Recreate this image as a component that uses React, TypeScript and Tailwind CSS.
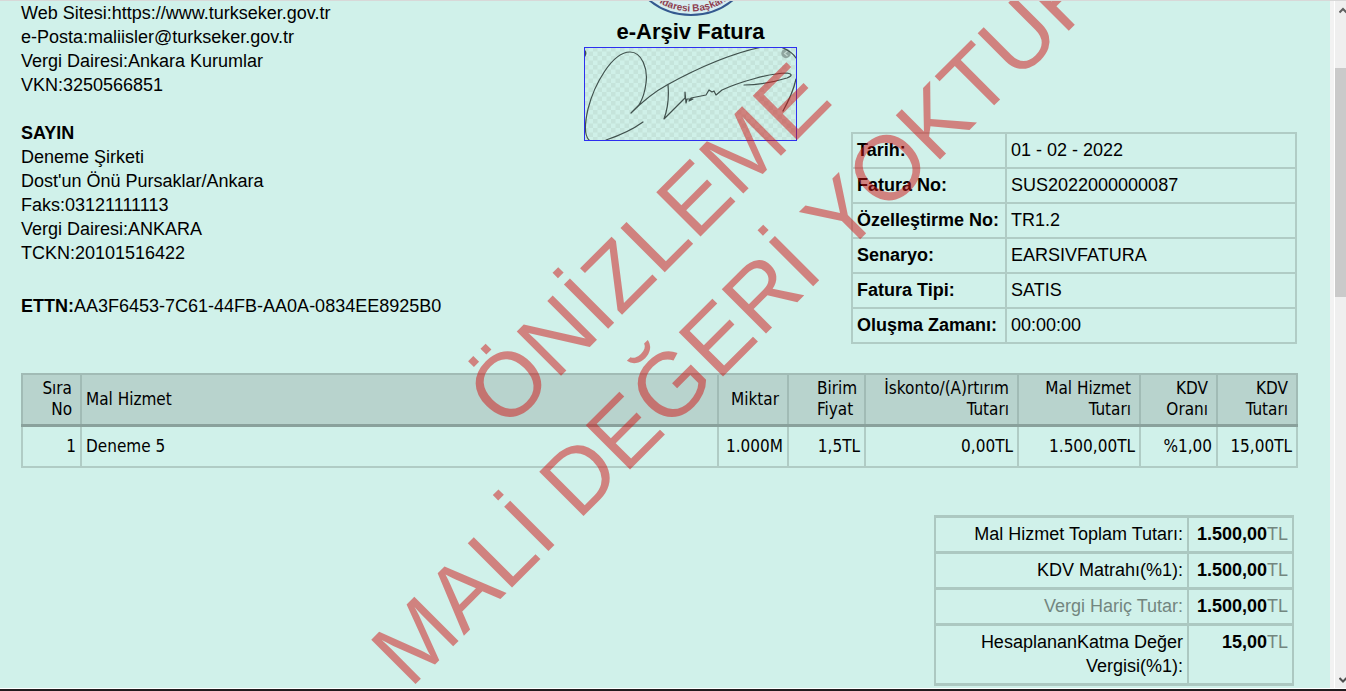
const BORDER = "border-2 border-[#b0ccc5]";

const details: [string, string][] = [
  ["Tarih:", "01 - 02 - 2022"],
  ["Fatura No:", "SUS2022000000087"],
  ["Özelleştirme No:", "TR1.2"],
  ["Senaryo:", "EARSIVFATURA"],
  ["Fatura Tipi:", "SATIS"],
  ["Oluşma Zamanı:", "00:00:00"],
];

const columns = [
  { title: "Sıra No", value: "1", width: "w-[59px]", align: "text-right pl-3 pr-2", cell: "text-right" },
  { title: "Mal Hizmet", value: "Deneme 5", width: "", align: "text-left px-1", cell: "text-left" },
  { title: "Miktar", value: "1.000M", width: "w-[70px]", align: "text-right pr-2", cell: "text-right" },
  { title: "Birim Fiyat", value: "1,5TL", width: "w-[77px]", align: "text-left pl-[28px]", cell: "text-right" },
  { title: "İskonto/(A)rtırım Tutarı", value: "0,00TL", width: "w-[153px]", align: "text-right pr-2", cell: "text-right" },
  { title: "Mal Hizmet Tutarı", value: "1.500,00TL", width: "w-[122px]", align: "text-right pl-3 pr-2", cell: "text-right" },
  { title: "KDV Oranı", value: "%1,00", width: "w-[77px]", align: "text-right pl-3 pr-2", cell: "text-right" },
  { title: "KDV Tutarı", value: "15,00TL", width: "w-[80px]", align: "text-right pl-3 pr-2", cell: "text-right" },
];

const totals = [
  { label: "Mal Hizmet Toplam Tutarı:", value: "1.500,00", muted: false },
  { label: "KDV Matrahı(%1):", value: "1.500,00", muted: false },
  { label: "Vergi Hariç Tutar:", value: "1.500,00", muted: true },
  { label: "HesaplananKatma Değer Vergisi(%1):", value: "15,00", muted: false },
];

function Seal() {
  return (
    <svg width="134" height="15" viewBox="0 119 134 15" className="block" aria-hidden="true">
      <circle cx="67" cy="67" r="66" fill="#d6eef0" stroke="#34598f" strokeWidth="2" />
      <path id="seal-ring" d="M4.500 67 A62.500 62.500 0 0 0 129.500 67" fill="none" />
      <text fontSize="10" fontWeight="700" fill="#8f3f50" fontFamily="Liberation Sans, sans-serif" textAnchor="middle">
        <textPath href="#seal-ring" startOffset="51%">İdaresi Başkan</textPath>
      </text>
    </svg>
  );
}

function Signature() {
  return (
    <svg width="213" height="94" viewBox="0 0 213 94" className="block" role="img" aria-label="İmza">
      <defs>
        <pattern id="checker" width="9" height="9" patternUnits="userSpaceOnUse">
          <rect width="9" height="9" fill="#cff0e8" />
          <rect width="4.5" height="4.5" fill="#c5e4db" />
          <rect x="4.5" y="4.5" width="4.5" height="4.5" fill="#c5e4db" />
        </pattern>
      </defs>
      <rect width="213" height="94" fill="url(#checker)" />
      <path d="M1 3 Q4 6 1 10Z" fill="#41534f" />
      <circle cx="202" cy="6.500" r="4.700" fill="#8fa59f" />
      <path d="M203.500 4 L200.500 6.500 L203.500 9" fill="none" stroke="#c2d8d1" strokeWidth="1.200" />
      <g fill="none" stroke="#40514d" strokeWidth="1.200" strokeLinecap="round" strokeLinejoin="round">
        <path d="M59 75 C48 83 34 89 22 93 M5 93 C0 88 1 75 4 62 C10 38 28 5 46 5 C58 5 64 22 62 36 C61 45 58 53 55 58 L47 66 C60 53 70 45 83 38 C112 22 145 7 178 0 M197 0 C204 3 209 6 212 11 M212 32 C209 46 204 55 199 64" />
        <path d="M84 38 C85 49 84 61 80 72 C87 65 94 58 101 51 L101 45 L102 56 L103 52 L109 52 L105 54 L107 51 C112 50 117 49 122 48 L125 43 L128 45 L130 44 L132 48 L138 43 C155 35 187 26 203 26 C209 27 208 29 203 31 C190 35 174 38 160 38" />
      </g>
      <rect x="0.500" y="0.500" width="212" height="93" fill="none" stroke="#2d2ff0" />
    </svg>
  );
}

function Watermark() {
  return (
    <div className="pointer-events-none absolute top-[544px] left-[266px] origin-top-left -rotate-45 text-[91px] leading-[115px] whitespace-nowrap text-[#d01414]/50">
      <p className="pl-[250px]">ÖNİZLEME</p>
      <p>MALİ DEĞERİ YOKTUR</p>
    </div>
  );
}

function Scrollbar() {
  return (
    <div className="flex w-[11px] shrink-0 flex-col items-end overflow-hidden bg-[#efefef]" aria-hidden="true">
      <svg width="7" height="67" viewBox="0 0 7 67" className="shrink-0">
        <path d="M0.500 11.500 L4 8 L7.500 11.500" fill="none" stroke="#606060" strokeWidth="2" />
      </svg>
      <div className="h-1/3 w-full bg-[#cacaca]" />
      <svg width="7" height="14" viewBox="0 0 7 14" className="mt-auto shrink-0">
        <path d="M0.500 4 L4 7.500 L7.500 4" fill="none" stroke="#505050" strokeWidth="2" />
      </svg>
    </div>
  );
}

export default function App() {
  return (
    <div className="flex h-screen flex-col overflow-hidden border-t border-[#d8d8d8] bg-white font-['Liberation_Sans',Arial,sans-serif] text-[18px] leading-6 text-black">
      <div className="flex min-h-0 flex-1">
        <main className="relative min-w-0 flex-1 overflow-hidden bg-[#d0f1ea] pr-8 pl-[21px]">
          <div className="grid grid-cols-[563px_213px_1fr]">
            <section>
              <p>Web Sitesi:https://www.turkseker.gov.tr</p>
              <p>e-Posta:maliisler@turkseker.gov.tr</p>
              <p>Vergi Dairesi:Ankara Kurumlar</p>
              <p>VKN:3250566851</p>
              <p className="mt-6 font-bold">SAYIN</p>
              <p>Deneme Şirketi</p>
              <p>Dost'un Önü Pursaklar/Ankara</p>
              <p>Faks:03121111113</p>
              <p>Vergi Dairesi:ANKARA</p>
              <p>TCKN:20101516422</p>
              <p className="mt-[29px]">
                <b>ETTN:</b>AA3F6453-7C61-44FB-AA0A-0834EE8925B0
              </p>
            </section>
            <section className="flex flex-col items-center">
              <Seal />
              <h1 className="mt-1 mb-[3px] text-[22px] leading-6 font-bold">e-Arşiv Fatura</h1>
              <Signature />
            </section>
            <section className="pt-[131px] pl-[54px]">
              <table className="w-[446px] border-collapse">
                <tbody>
                  {details.map(([label, value]) => (
                    <tr key={label} className="h-[35px]">
                      <th scope="row" className={`${BORDER} w-[154px] px-1 pb-px text-left font-bold whitespace-nowrap`}>{label}</th>
                      <td className={`${BORDER} px-1 pb-px`}>{value}</td>
                    </tr>
                  ))}
                </tbody>
              </table>
            </section>
          </div>

          <table className="mt-[29px] w-full table-fixed border-collapse font-['DejaVu_Sans_Condensed','DejaVu_Sans',sans-serif] text-[17px] leading-[21px]">
            <thead>
              <tr className="h-[51px] bg-[#b8d3cd]">
                {columns.map((c) => (
                  <th key={c.title} scope="col" className={`border-2 border-b-[3px] border-[#a1bbb5] border-b-[#8aa19c] font-normal ${c.width} ${c.align}`}>{c.title}</th>
                ))}
              </tr>
            </thead>
            <tbody>
              <tr className="h-[42px]">
                {columns.map((c) => (
                  <td key={c.title} className={`${BORDER} px-1 ${c.cell}`}>{c.value}</td>
                ))}
              </tr>
            </tbody>
          </table>

          <table className="mt-[47px] mr-1 ml-auto w-[360px] border-collapse">
            <tbody>
              {totals.map((t) => (
                <tr key={t.label} className="align-top">
                  <th scope="row" className={`border-x-2 border-y-[3px] border-[#acc8c1] px-1 pt-1 pb-[5px] text-right font-normal ${t.muted ? "text-[#73867f]" : ""}`}>{t.label}</th>
                  <td className="w-[105px] border-x-2 border-y-[3px] border-[#acc8c1] pt-1 pb-[5px] pr-1 text-right whitespace-nowrap">
                    <b>{t.value}</b>
                    <span className="text-[#73867f]">TL</span>
                  </td>
                </tr>
              ))}
            </tbody>
          </table>
          <Watermark />
        </main>
        <div className="w-1 shrink-0 bg-[#f2f2f2]" />
        <div className="w-px shrink-0 bg-white" />
        <Scrollbar />
      </div>
      <div className="h-[3px] shrink-0 border-t border-white bg-[#211c1e]" />
    </div>
  );
}
